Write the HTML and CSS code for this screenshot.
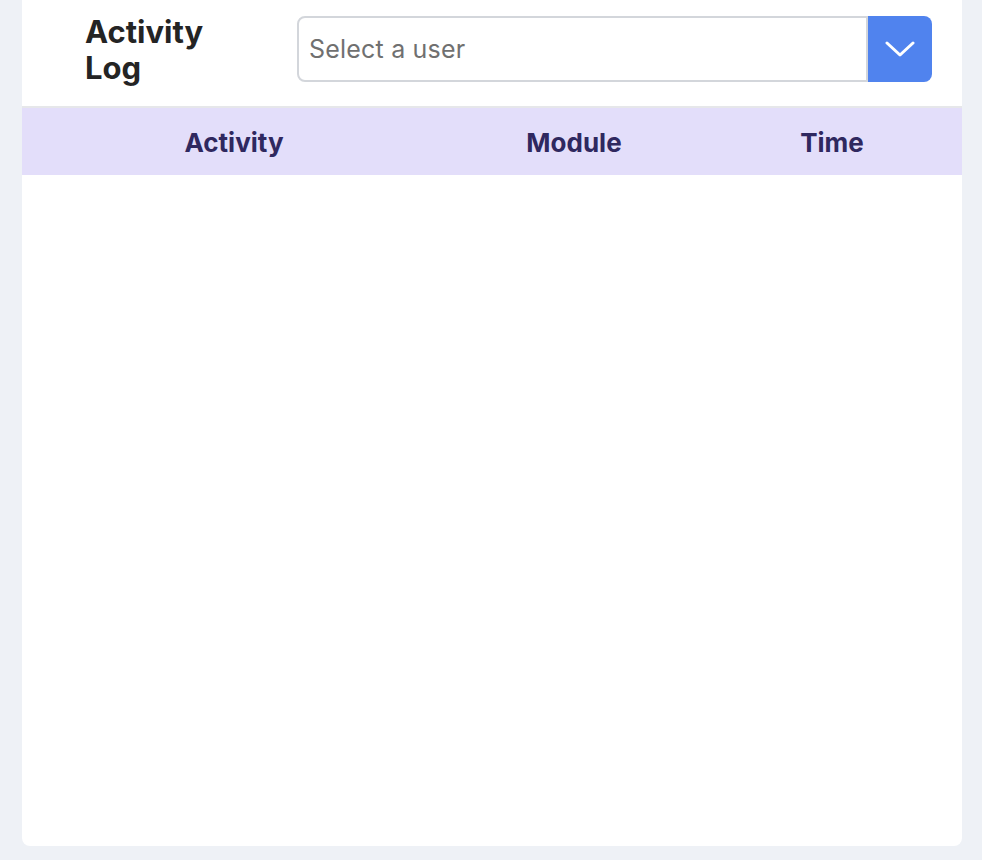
FILE: index.html
```html
<!DOCTYPE html>
<html lang="en">
<head>
<meta charset="utf-8">
<title>Activity Log</title>
<link rel="stylesheet" href="styles.css">
</head>
<body>
<div class="card">
  <div class="card-header">
    <h2 class="title">Activity Log</h2>
    <div class="select">
      <div class="select-input">Select a user</div>
      <button class="select-btn" type="button" aria-label="Open">
        <svg width="30" height="16" viewBox="0 0 30 16" fill="none"><path d="M2 2 L15 14 L28 2" stroke="#fff" stroke-width="3" stroke-linecap="round" stroke-linejoin="round"/></svg>
      </button>
    </div>
  </div>
  <table class="log-table">
    <thead>
      <tr>
        <th class="col-activity">Activity</th>
        <th class="col-module">Module</th>
        <th class="col-time">Time</th>
      </tr>
    </thead>
    <tbody></tbody>
  </table>
</div>
</body>
</html>
```
FILE: styles.css
```css
* { box-sizing: border-box; }
html, body { height: 100%; }
body {
  margin: 0;
  padding: 0 20px 14px 22px;
  background: #eef1f6;
  font-family: Inter, "Noto Sans", sans-serif;
}
.card {
  height: 100%;
  background: #fff;
  border-radius: 0 0 8px 8px;
  overflow: hidden;
}
.card-header {
  display: flex;
  align-items: center;
  height: 108px;
  padding: 0 30px 8px 63px;
  border-bottom: 2px solid #e6e7ea;
}
.title {
  width: 212px;
  flex: none;
  margin: 2px 0 0;
  font-size: 31px;
  line-height: 36px;
  font-weight: 700;
  color: #242424;
  padding-right: 80px;
}
.select {
  flex: 1;
  display: flex;
  height: 66px;
}
.select-input {
  flex: 1;
  display: flex;
  align-items: center;
  padding: 0 10px;
  border: 2px solid #d3d6db;
  border-radius: 8px 0 0 8px;
  font-size: 25px;
  color: #707070;
  letter-spacing: 0.2px;
}
.select-btn {
  width: 64px;
  flex: none;
  border: 0;
  padding: 0;
  background: #5083ee;
  border-radius: 0 8px 8px 0;
  display: flex;
  align-items: center;
  justify-content: center;
}
.log-table {
  width: 100%;
  border-collapse: collapse;
  table-layout: fixed;
}
.log-table th {
  height: 67px;
  background: #e3defa;
  color: #2f285f;
  font-size: 26px;
  font-weight: 700;
  text-align: center;
  padding: 2px 0 0;
}
.col-activity { width: 424px; }
.col-module { width: 256px; }
```
